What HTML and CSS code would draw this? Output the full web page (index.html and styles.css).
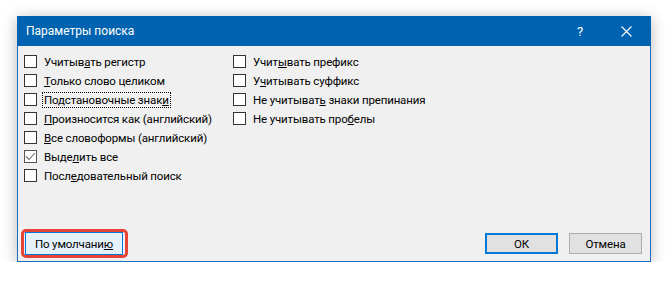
FILE: index.html
```html
<!DOCTYPE html>
<html lang="ru">
<head>
    <meta charset="UTF-8">
    <title>Параметры поиска</title>
    <link rel="stylesheet" href="styles.css">
</head>
<body>
    <div class="window">
        <div class="titlebar">
            <span class="title">Параметры поиска</span>
            <span class="help">?</span>
            <span class="close">
                <svg width="11" height="11" viewBox="0 0 11 11"><path d="M0.5 0.5 L10.5 10.5 M10.5 0.5 L0.5 10.5" stroke="#fff" stroke-width="1.1" fill="none"/></svg>
            </span>
        </div>
        <div class="content">
            <div class="options">
                <ul class="col col-left">
                    <li class="option"><span class="box"></span><span class="label">Учитыв<u>а</u>ть регистр</span></li>
                    <li class="option"><span class="box"></span><span class="label"><u>Т</u>олько слово целиком</span></li>
                    <li class="option"><span class="box"></span><span class="label focused">Подстановочные знак<u>и</u></span></li>
                    <li class="option"><span class="box"></span><span class="label"><u>П</u>роизносится как (английский)</span></li>
                    <li class="option"><span class="box"></span><span class="label"><u>В</u>се словоформы (английский)</span></li>
                    <li class="option"><span class="box checked"><svg width="11" height="11" viewBox="0 0 11 11"><path d="M1 5.5 L4 8.5 L10 2" stroke="#6e6e6e" stroke-width="1.1" fill="none"/></svg></span><span class="label">Выде<u>л</u>ить все</span></li>
                    <li class="option"><span class="box"></span><span class="label">Посл<u>е</u>довательный поиск</span></li>
                </ul>
                <ul class="col">
                    <li class="option"><span class="box"></span><span class="label">Учит<u>ы</u>вать префикс</span></li>
                    <li class="option"><span class="box"></span><span class="label">У<u>ч</u>итывать суффикс</span></li>
                    <li class="option"><span class="box"></span><span class="label">Не учитыват<u>ь</u> знаки препинания</span></li>
                    <li class="option"><span class="box"></span><span class="label">Не учитывать про<u>б</u>елы</span></li>
                </ul>
            </div>
            <div class="footer">
                <span class="highlight"><button class="btn btn-wide">По умолчани<u>ю</u></button></span>
                <button class="btn btn-ok">ОК</button>
                <button class="btn">Отмена</button>
            </div>
        </div>
    </div>
</body>
</html>
```

FILE: styles.css
```css
*,
::before,
::after {
    box-sizing: border-box;
}
body {
    margin: 0;
    background-color: #fff;
    font-family: "Segoe UI", Roboto, sans-serif;
    font-size: 11.5px;
    letter-spacing: -.15px;
    color: #000;
}
.window {
    display: flex;
    flex-direction: column;
    width: 634px;
    height: 246px;
    margin: 16px 0 0 17px;
    border: 1px solid #1a6cbc;
    border-top: 0;
    background-color: #f0f0f0;
    box-shadow: 0 2px 14px rgba(0, 0, 0, .28);
}
.titlebar {
    display: flex;
    align-items: center;
    height: 30px;
    margin: 0 -1px;
    padding: 0 2px 0 9px;
    background-color: #0063b1;
    color: #fff;
}
.title {
    flex: 1;
    font-size: 12px;
    letter-spacing: 0;
}
.help {
    width: 46px;
    text-align: center;
    font-size: 13px;
}
.close {
    display: flex;
    justify-content: center;
    width: 46px;
}
.content {
    flex: 1;
    display: flex;
    flex-direction: column;
    justify-content: space-between;
}
.options {
    display: flex;
    padding: 6px 0 0 6px;
}
.col {
    margin: 0;
    padding: 0;
    list-style: none;
}
.col-left {
    width: 209px;
}
.option {
    display: flex;
    align-items: center;
    height: 19px;
}
.box {
    display: flex;
    align-items: center;
    justify-content: center;
    width: 13px;
    height: 13px;
    margin-right: 5px;
    border: 1px solid #333;
    background-color: #fff;
}
.box.checked {
    border-color: #555;
}
.label {
    padding: 0 1px;
    border: 1px solid transparent;
    line-height: 14px;
}
.label.focused {
    border: 1px dotted #000;
}
.footer {
    display: flex;
    align-items: center;
    padding: 0 8px 3px 3px;
}
.highlight {
    display: flex;
    padding: 0 2px 0 1px;
    border: 3px solid #e64235;
    border-radius: 5px;
}
.btn {
    width: 73px;
    height: 21px;
    padding: 0;
    border: 1px solid #adadad;
    background-color: #e1e1e1;
    font: inherit;
    letter-spacing: inherit;
    color: #000;
}
.btn-wide {
    width: 98px;
    height: 23px;
    border-color: #0078d7;
    background-color: #e5f1fb;
}
.btn-ok {
    margin-left: auto;
    margin-right: 11px;
    border: 2px solid #0078d7;
}
```
